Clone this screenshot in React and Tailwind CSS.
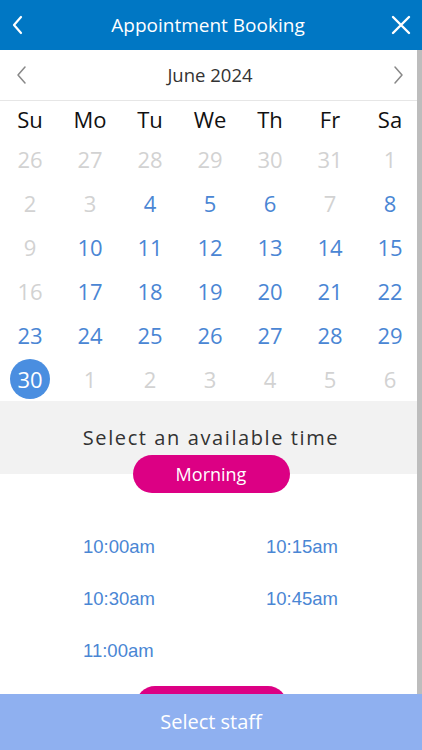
import React from 'react';

const font = { fontFamily: '"Open Sans", "Noto Sans", sans-serif' };

const weeks = [
  [[26, 0], [27, 0], [28, 0], [29, 0], [30, 0], [31, 0], [1, 0]],
  [[2, 0], [3, 0], [4, 1], [5, 1], [6, 1], [7, 0], [8, 1]],
  [[9, 0], [10, 1], [11, 1], [12, 1], [13, 1], [14, 1], [15, 1]],
  [[16, 0], [17, 1], [18, 1], [19, 1], [20, 1], [21, 1], [22, 1]],
  [[23, 1], [24, 1], [25, 1], [26, 1], [27, 1], [28, 1], [29, 1]],
  [[30, 2], [1, 0], [2, 0], [3, 0], [4, 0], [5, 0], [6, 0]],
];

const days = ['Su', 'Mo', 'Tu', 'We', 'Th', 'Fr', 'Sa'];
const times = ['10:00am', '10:15am', '10:30am', '10:45am', '11:00am'];

export default function App() {
  return (
    <div className="relative w-[422px] h-[750px] overflow-hidden bg-white flex flex-col" style={font}>
      {/* Header */}
      <div className="h-[50px] shrink-0 bg-[#0077c4] flex items-center justify-between px-[10px] text-white">
        <svg width="16" height="20" viewBox="0 0 16 20" fill="none" stroke="white" strokeWidth="2.2" strokeLinecap="round" strokeLinejoin="round">
          <path d="M11 2 L4 10 L11 18" />
        </svg>
        <h1 className="text-[19px] leading-none">Appointment Booking</h1>
        <svg width="22" height="22" viewBox="0 0 22 22" fill="none" stroke="white" strokeWidth="2.4" strokeLinecap="round">
          <path d="M3 3 L19 19 M19 3 L3 19" />
        </svg>
      </div>

      {/* Scroll content */}
      <div className="flex-1 overflow-hidden">
        <div className="h-[51px] border-b border-[#e6e6e6] flex items-center justify-between px-[14px] pr-[16px]">
          <svg width="14" height="20" viewBox="0 0 14 20" fill="none" stroke="#888" strokeWidth="1.5" strokeLinecap="round" strokeLinejoin="round">
            <path d="M11 2 L4 10 L11 18" />
          </svg>
          <span className="text-[18.5px] text-[#333]">June 2024</span>
          <svg width="14" height="20" viewBox="0 0 14 20" fill="none" stroke="#888" strokeWidth="1.5" strokeLinecap="round" strokeLinejoin="round">
            <path d="M3 2 L10 10 L3 18" />
          </svg>
        </div>

        <div className="w-[420px] grid grid-cols-7 h-[36px] items-center">
          {days.map(d => (
            <div key={d} className="text-center text-[22px] text-[#111]">{d}</div>
          ))}
        </div>

        {weeks.map((week, i) => (
          <div key={i} className="w-[420px] grid grid-cols-7 h-[44px] items-center">
            {week.map(([n, s], j) => (
              <div key={j} className="flex justify-center">
                {s === 2 ? (
                  <span className="w-[40px] h-[40px] rounded-full bg-[#4a8ee0] text-white text-[22px] flex items-center justify-center">{n}</span>
                ) : (
                  <span className={`text-[22px] ${s ? 'text-[#4a86d4]' : 'text-[#d2d2d2]'}`}>{n}</span>
                )}
              </div>
            ))}
          </div>
        ))}

        {/* Time section */}
        <div className="bg-[#f2f2f2] h-[73px] pt-[23px]">
          <p className="text-center text-[20px] leading-[28px] tracking-[1.6px] text-[#333]">Select an available time</p>
        </div>
        <div className="relative -mt-[19px] flex justify-center">
          <button className="w-[157px] h-[38px] rounded-full bg-[#dc0084] text-white text-[18px]">Morning</button>
        </div>

        <div className="grid grid-cols-[183px_1fr] pl-[83px] mt-[28px]" style={{ fontFamily: '"Liberation Sans", Arial, sans-serif' }}>
          {times.map(t => (
            <div key={t} className="h-[52px] flex items-center text-[18.5px] text-[#4a86d4]">{t}</div>
          ))}
        </div>

        <div className="flex justify-center mt-[9px]">
          <div className="w-[151px] h-[38px] rounded-full bg-[#dc0084]" />
        </div>
      </div>

      {/* Scrollbar */}
      <div className="absolute right-0 top-[50px] bottom-[56px] w-[5px] bg-[#bdbdbd]" />

      {/* Footer */}
      <div className="absolute left-0 right-0 bottom-0 h-[56px] bg-[#8fb0f0] flex items-center justify-center">
        <span className="text-white text-[20px]">Select staff</span>
      </div>
    </div>
  );
}
